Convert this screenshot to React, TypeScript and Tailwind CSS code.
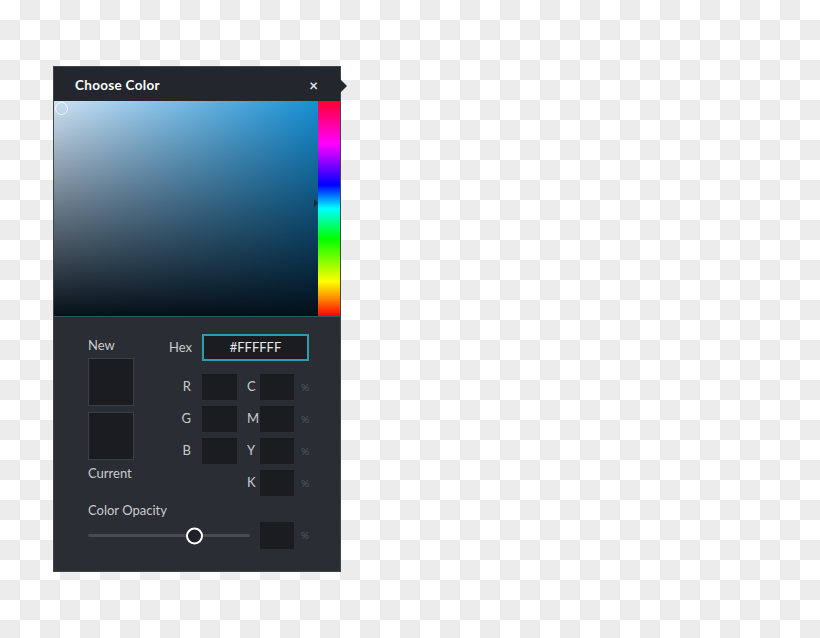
import React from "react";

const font = { fontFamily: "Lato, 'Open Sans', sans-serif" };

const NumBox = ({ w = "w-[35px]" }: { w?: string }) => (
  <div className={`${w} h-[26px] bg-[#1a1c20]`} />
);

const rgb = ["R", "G", "B"];
const cmyk = ["C", "M", "Y", "K"];

const ColorPicker = () => {
  return (
    <div className="relative w-[288px] h-[506px] border border-[#40454c] bg-[#2a2d33] flex flex-col">
      {/* Header */}
      <div className="h-[34px] pt-[2px] bg-[#23262c] flex items-center justify-between pl-[21px] pr-[22px]">
        <span className="text-white text-[13.5px] font-bold tracking-[0.3px]">Choose Color</span>
        <span className="text-[#e4e4e4] text-[15px] font-bold leading-none">×</span>
      </div>
      <div className="absolute left-full top-[12px] w-0 h-0 border-y-[7px] border-y-transparent border-l-[7px] border-l-[#23262c]" />

      {/* Picker */}
      <div className="flex h-[216px] border-b border-[#2f5866]">
        <div className="relative w-[264px] h-full bg-[linear-gradient(to_right,#cfe2f4,#168fd4)]">
          <div className="absolute inset-0 bg-[linear-gradient(to_bottom,rgba(4,14,24,0),rgba(4,14,24,0.5)_50%,rgba(3,12,20,0.98))]" />
          <div className="absolute left-[1px] top-[1px] w-[13px] h-[13px] rounded-full border-[1.5px] border-white/80" />
          <div className="absolute right-0 top-[98px] w-0 h-0 border-y-[4px] border-y-transparent border-l-[4px] border-l-[#1d2a33]" />
        </div>
        <div className="w-[22px] h-full bg-[linear-gradient(to_bottom,#ff0030_0%,#ff00ff_20%,#0000ff_39%,#00ffff_50%,#00ff00_64%,#ffff00_84%,#ff8800_92%,#ff0000_100%)]" />
      </div>

      {/* Values */}
      <div className="flex-1 pl-[34px] pt-[17px] text-[#c9cbcd] text-[13px]">
        <div className="flex">
          <div className="w-[46px] shrink-0 flex flex-col">
            <div className="h-[24px] flex items-center">New</div>
            <div className="h-[48px] bg-[#1a1c20] border border-[#3b3e44]" />
            <div className="h-[48px] mt-[6px] bg-[#1a1c20] border border-[#3b3e44]" />
            <div className="mt-[5px] leading-[16px]">Current</div>
          </div>

          <div className="ml-[26px] shrink-0 flex flex-col">
            <div className="flex items-center h-[27px]">
              <div className="w-[42px] text-right pr-[10px]">Hex</div>
              <div className="w-[107px] h-[27px] border-2 border-[#2a9db0] bg-[#1a1c20] flex items-center justify-center text-[#e6e6e6]">
                #FFFFFF
              </div>
            </div>
            <div className="mt-[13px] flex flex-col gap-[6px]">
              {cmyk.map((c, i) => (
                <div key={c} className="flex items-center h-[26px]">
                  <div className="w-[42px] text-right pr-[11px]">{rgb[i] ?? ""}</div>
                  {rgb[i] ? <NumBox /> : <div className="w-[35px]" />}
                  <div className="w-[23px] pl-[10px]">{c}</div>
                  <NumBox w="w-[34px]" />
                  <div className="ml-[7px] text-[10px] text-[#4d5a60]">%</div>
                </div>
              ))}
            </div>
          </div>
        </div>

        <div className="mt-[6px] leading-[16px]">Color Opacity</div>
        <div className="mt-[4px] flex items-center h-[27px]">
          <div className="relative w-[162px] h-[3px] bg-[#474b52] rounded-full">
            <div className="absolute left-[98px] top-1/2 -translate-y-1/2 w-[17px] h-[17px] rounded-full border-2 border-white bg-[#1d2024]" />
          </div>
          <div className="ml-[10px] w-[34px] h-[27px] bg-[#1a1c20]" />
          <div className="ml-[7px] text-[10px] text-[#4d5a60]">%</div>
        </div>
      </div>
    </div>
  );
};

export default function App() {
  return (
    <div
      className="w-full h-[638px] pl-[53px] pt-[66px] bg-[repeating-conic-gradient(#ececec_0_25%,#ffffff_0_50%)] bg-[length:40px_40px] bg-[position:20px_20px]"
      style={font}
    >
      <ColorPicker />
    </div>
  );
}
